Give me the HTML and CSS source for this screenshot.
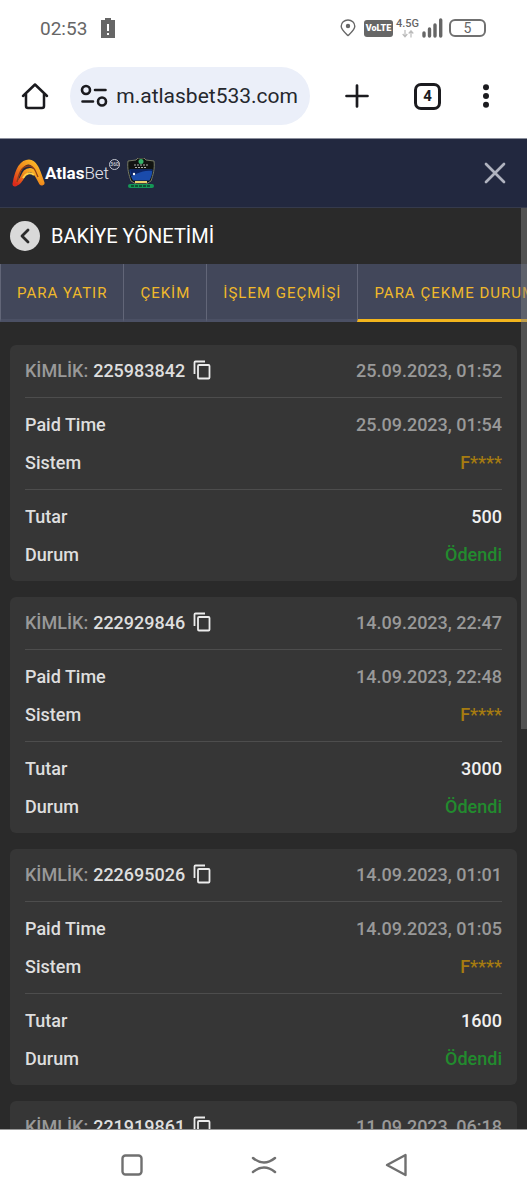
FILE: index.html
```
<!DOCTYPE html>
<html lang="tr">
<head>
<meta charset="utf-8">
<meta name="viewport" content="width=device-width, initial-scale=1">
<title>Bakiye Yönetimi</title>
<link rel="stylesheet" href="styles.css">
</head>
<body>
<div class="screen">
  <div class="status-bar">
    <span class="clock">02:53</span>
    <svg class="battery-alert" width="14" height="20" viewBox="0 0 14 20"><path d="M0 2h4V0h6v2h4v18H0z" fill="#666"/><path d="M6 6h2v7H6zM6 15h2v2H6z" fill="#fff"/></svg>
    <div class="status-icons">
      <svg width="16" height="18" viewBox="0 0 16 18" fill="none" stroke="#666" stroke-width="1.4"><path d="M8 16.6C4.500 13.200 1.200 10.500 1.200 7.200a6.800 6.200 0 0 1 13.600 0c0 3.300-3.300 6-6.800 9.400z"/><circle cx="8" cy="7" r="1.500" fill="#666"/></svg>
      <span class="volte">VoLTE</span>
      <span class="network"><span>4.5G</span><svg width="12" height="8" viewBox="0 0 12 8" fill="none" stroke="#bbb" stroke-width="1.200"><path d="M3 0v6.500M.700 4 3 6.800 5.300 4M9 7.500V1M6.700 3.500 9 .800l2.300 2.700"/></svg></span>
      <svg class="signal" width="21" height="20" viewBox="0 0 21 20" stroke="#666" stroke-width="3.400" stroke-linecap="round"><path d="M2 15v3M7.500 11v7M13 7v11M18.700 2v16"/></svg>
      <span class="battery">5</span>
    </div>
  </div>

  <div class="browser-bar">
    <button class="icon-button" aria-label="Ana sayfa"><svg width="28" height="28" viewBox="0 0 28 28" fill="none" stroke="#1b1b1f" stroke-width="2.500" stroke-linejoin="round" stroke-linecap="round"><path d="M2 14 14 2.500 26 14M5 12v12q0 2 2 2h14q2 0 2-2V12"/></svg></button>
    <label class="address">
      <svg width="28" height="24" viewBox="0 0 28 24" fill="none" stroke="#1b1b1f" stroke-width="2.600" stroke-linecap="round"><circle cx="6" cy="6" r="4"/><path d="M15 6h10.500M2.500 17.500h10.500"/><circle cx="22" cy="17.500" r="4"/></svg>
      <span class="address-clip"><input class="address-input" type="text" value="m.atlasbet533.com" aria-label="Adres"></span>
    </label>
    <button class="icon-button" aria-label="Yeni sekme"><svg width="24" height="24" viewBox="0 0 24 24" stroke="#1b1b1f" stroke-width="2.700" stroke-linecap="round"><path d="M12 1.500v21M1.500 12h21"/></svg></button>
    <button class="tab-count" aria-label="4 sekme">4</button>
    <button class="icon-button menu" aria-label="Menü"><svg width="8" height="24" viewBox="0 0 8 24" fill="#1b1b1f"><circle cx="4" cy="3.200" r="3"/><circle cx="4" cy="12" r="3"/><circle cx="4" cy="20.800" r="3"/></svg></button>
  </div>

  <main class="page">
    <header class="site-header">
      <a class="logo" href="#" aria-label="AtlasBet">
        <svg width="33" height="28" viewBox="0 0 33 28"><defs><linearGradient id="flame" x1="0" y1="1" x2="1" y2="0"><stop offset="0" stop-color="#dc2a1b"/><stop offset=".5" stop-color="#f08a1c"/><stop offset="1" stop-color="#ffc62b"/></linearGradient></defs><path d="M3 25C5 13 9 3 17 3c7 0 10 13 13 21" fill="none" stroke="url(#flame)" stroke-width="5" stroke-linecap="round"/><path d="M4 25C12 22 10 11 18 11c5 0 7 6 11 13" fill="none" stroke="url(#flame)" stroke-width="4" stroke-linecap="round"/><path d="M5 23C8 10 11 7 17 7c5 0 7 6 9 11" fill="none" stroke="#8e3d18" stroke-width="1.300"/><path d="M11 19c3-5 7-6 11-3" fill="none" stroke="#ffd24a" stroke-width="2"/></svg>
        <span class="wordmark"><b>Atlas</b>Bet</span>
        <span class="logo-badge">360</span>
      </a>
      <svg class="crest" width="28" height="31" viewBox="0 0 28 31"><path d="M1 3l8-1 2-2h6l2 2 8 1c1 8-1 14-3 20l-5 3H9l-5-3C2 17 0 11 1 3z" fill="#111411" stroke="#777b66"/><path d="M2.500 11.500h23c0 4-1 7-3 11H6c-2-4-3.500-7-3.500-11z" fill="#1a4bab"/><path d="M4 18c6-1 9-6 21-5v-1.500H3z" fill="#0c2464"/><path d="M8 24h12" stroke="#e9d26a" stroke-width="2"/><circle cx="14" cy="3.500" r="2.500" fill="#35b56b"/><path d="M7 7h14M8 9.500h12" stroke="#aeb3ac" stroke-dasharray="2 1"/><circle cx="7" cy="16" r="1.200" fill="#fff"/><rect x="1" y="26" width="26" height="4" rx="2" fill="#159657"/><path d="M4 28h20" stroke="#0b3d27" stroke-width="1.500" stroke-dasharray="3 1"/></svg>
      <button class="close" aria-label="Kapat"><svg width="22" height="22" viewBox="0 0 22 22" stroke="#b0b3bf" stroke-width="2.700" stroke-linecap="round"><path d="M2 2l18 18M20 2 2 20"/></svg></button>
    </header>

    <div class="title-bar">
      <button class="back" aria-label="Geri"><svg width="10" height="16" viewBox="0 0 10 16" fill="none" stroke="#2b2b2b" stroke-width="2.800" stroke-linecap="round" stroke-linejoin="round"><path d="M8 2 2 8l6 6"/></svg></button>
      <h1>BAKİYE YÖNETİMİ</h1>
    </div>

    <nav class="tabs">
      <a href="#">PARA YATIR</a>
      <a href="#">ÇEKİM</a>
      <a href="#">İŞLEM GEÇMİŞİ</a>
      <a href="#" class="active">PARA ÇEKME DURUMU</a>
    </nav>

    <div class="cards" id="cards"></div>
    <div class="scrollbar"></div>
  </main>

  <div class="system-nav">
    <button aria-label="Son uygulamalar"><svg width="22" height="22" viewBox="0 0 22 22" fill="none" stroke="#707070" stroke-width="2.400"><rect x="1.500" y="1.500" width="19" height="19" rx="3"/></svg></button>
    <button aria-label="Ana ekran"><svg width="26" height="18" viewBox="0 0 26 18" fill="none" stroke="#707070" stroke-width="2.500" stroke-linecap="round"><path d="M2 2q11 9 22 0M2 16q11-9 22 0"/></svg></button>
    <button aria-label="Geri"><svg width="22" height="24" viewBox="0 0 22 24" fill="none" stroke="#707070" stroke-width="2.400" stroke-linejoin="round"><path d="M20.500 2v20L2 12z"/></svg></button>
  </div>
</div>
<script src="cards.js"></script>
</body>
</html>
```
FILE: cards.js
```
const payments = [
  { id: "225983842", created: "25.09.2023, 01:52", paid: "25.09.2023, 01:54", amount: 500 },
  { id: "222929846", created: "14.09.2023, 22:47", paid: "14.09.2023, 22:48", amount: 3000 },
  { id: "222695026", created: "14.09.2023, 01:01", paid: "14.09.2023, 01:05", amount: 1600 },
  { id: "221919861", created: "11.09.2023, 06:18" }
];

const copyIcon = '<svg width="18" height="20" viewBox="0 0 18 20" fill="none" stroke="#ececec" stroke-width="1.800" stroke-linejoin="round"><path d="M1.500 14V2.500q0-1 1-1H12"/><rect x="5" y="5" width="11.500" height="13.500" rx="1"/></svg>';

const details = (p) => p.paid ? `
  <dl class="group">
    <div class="row"><dt>Paid Time</dt><dd class="muted">${p.paid}</dd></div>
    <div class="row"><dt>Sistem</dt><dd class="system">F****</dd></div>
  </dl>
  <dl class="group">
    <div class="row"><dt>Tutar</dt><dd class="amount">${p.amount}</dd></div>
    <div class="row"><dt>Durum</dt><dd class="paid">Ödendi</dd></div>
  </dl>` : "";

document.getElementById("cards").innerHTML = payments.map((p) => `
  <article class="card">
    <div class="card-head">
      <span class="muted">KİMLİK:</span>
      <span>${p.id}</span>
      <button class="copy" aria-label="Kopyala">${copyIcon}</button>
      <time class="muted">${p.created}</time>
    </div>${details(p)}
  </article>`).join("");
```
FILE: styles.css
```
* { box-sizing: border-box; }
body { margin: 0; background: #fff; font-family: Roboto, "Liberation Sans", sans-serif; }
button { padding: 0; border: 0; background: none; display: grid; place-items: center; font-family: inherit; }
svg { display: block; flex: none; }
a { text-decoration: none; }

.screen { height: 100vh; display: flex; flex-direction: column; overflow: hidden; }

.status-bar { flex: none; height: 56px; padding: 0 41px 0 40px; display: flex; align-items: center; color: #666; }
.clock { font-size: 19px; }
.battery-alert { margin-left: 14px; }
.status-icons { margin-left: auto; display: flex; align-items: center; }
.volte { margin-left: 8px; width: 29px; height: 17px; border-radius: 3px; background: #666; color: #fff; font-size: 9px; font-weight: 900; line-height: 17px; text-align: center; }
.network { margin-left: 4px; width: 21px; display: flex; flex-direction: column; align-items: center; gap: 1px; font-size: 11px; line-height: 11px; font-weight: 500; }
.signal { margin-left: 4px; }
.battery { margin-left: 6px; width: 37px; height: 18px; border: 2px solid #707070; border-radius: 6px; font-size: 14px; line-height: 15px; text-align: center; }

.browser-bar { flex: none; height: 82px; padding: 11px 37px 13px 21px; display: flex; align-items: center; }
.icon-button { flex: none; height: 40px; }
.address { flex: 1; min-width: 0; height: 58px; margin: 0 35px 0 21px; padding: 0 12px 0 10px; display: flex; align-items: center; gap: 9px; border-radius: 29px; background: #ebeff9; }
.address-clip { flex: 1; min-width: 0; display: flex; justify-content: flex-end; overflow: hidden; }
.address-input { flex: none; width: 240px; padding: 0; border: 0; outline: 0; background: none; color: #25272d; font: 21px/28px Roboto, sans-serif; text-align: right; }
.tab-count { flex: none; width: 27px; height: 27px; margin: 0 41px 0 45px; border: 3px solid #1b1b1f; border-radius: 7px; color: #1b1b1f; font-size: 15px; font-weight: 700; line-height: 20px; }

.page { position: relative; flex: 1; min-height: 0; overflow: hidden; background: #2a2a2a; border-bottom: 1px solid #999; }
.site-header { height: 70px; padding: 0 21px 0 12px; display: flex; align-items: center; background: #22283f; border-top: 1px solid #8b8f9c; border-bottom: 1px solid #353a4c; }
.logo { display: flex; align-items: center; color: #e4e6ed; }
.wordmark { font-size: 17px; font-weight: 300; line-height: 28px; }
.wordmark b { font-weight: 700; color: #fff; }
.logo-badge { align-self: flex-start; width: 11px; height: 11px; border: 1px solid #c5c8d2; border-radius: 50%; font-size: 5px; line-height: 9px; text-align: center; }
.crest { margin-left: 7px; }
.close { margin-left: auto; }

.title-bar { height: 56px; padding: 0 10px; display: flex; align-items: center; gap: 11px; }
.back { width: 30px; height: 30px; border-radius: 50%; background: #d9d9d9; }
h1 { margin: 0; color: #fff; font-size: 20px; font-weight: 400; line-height: 28px; }

.tabs { height: 58px; display: flex; overflow: hidden; background: #42475a; }
.tabs a { flex: none; padding: 0 16px; border-left: 1px solid #626678; border-bottom: 3px solid #4b5064; color: #f0b92b; font-size: 15px; line-height: 58px; letter-spacing: 1px; white-space: nowrap; }
.tabs .active { border-bottom-color: #f2b51d; }

.cards { padding: 23px 10px 0; display: grid; gap: 16px; }
.card { padding: 0 15px; border-radius: 6px; background: #363636; color: #dedede; font-size: 18px; font-weight: 500; }
.card-head { height: 52px; padding-bottom: 2px; display: flex; align-items: center; gap: 5px; }
.card-head time { margin-left: auto; }
.copy { margin-left: 3px; }
.group { margin: 0; padding: 7px 0 8px; border-top: 1px solid #4d4d4d; }
.row { height: 38px; display: flex; align-items: center; justify-content: space-between; }
dd { margin: 0; }
.muted { color: #999; }
.system { color: #a67c10; }
.amount { color: #f0f0f0; }
.paid { color: #228b2e; }
.scrollbar { position: absolute; top: 70px; right: 0; width: 6px; height: 521px; background: rgba(128, 128, 128, 0.45); }

.system-nav { flex: none; height: 70px; display: grid; grid-template-columns: repeat(3, 132px); justify-content: center; align-items: center; justify-items: center; }
```
